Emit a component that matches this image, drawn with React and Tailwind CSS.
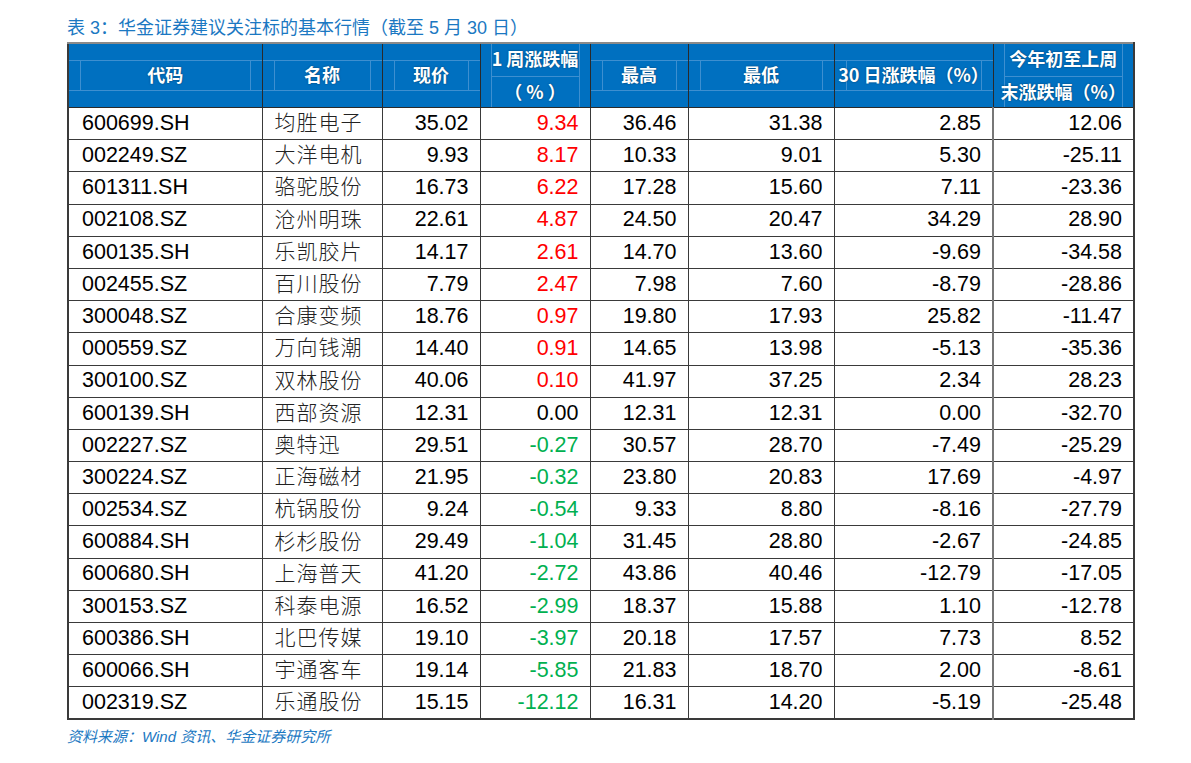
const ROWS = [
  ['600699.SH', '均胜电子', '35.02', '9.34', '36.46', '31.38', '2.85', '12.06'],
  ['002249.SZ', '大洋电机', '9.93', '8.17', '10.33', '9.01', '5.30', '-25.11'],
  ['601311.SH', '骆驼股份', '16.73', '6.22', '17.28', '15.60', '7.11', '-23.36'],
  ['002108.SZ', '沧州明珠', '22.61', '4.87', '24.50', '20.47', '34.29', '28.90'],
  ['600135.SH', '乐凯胶片', '14.17', '2.61', '14.70', '13.60', '-9.69', '-34.58'],
  ['002455.SZ', '百川股份', '7.79', '2.47', '7.98', '7.60', '-8.79', '-28.86'],
  ['300048.SZ', '合康变频', '18.76', '0.97', '19.80', '17.93', '25.82', '-11.47'],
  ['000559.SZ', '万向钱潮', '14.40', '0.91', '14.65', '13.98', '-5.13', '-35.36'],
  ['300100.SZ', '双林股份', '40.06', '0.10', '41.97', '37.25', '2.34', '28.23'],
  ['600139.SH', '西部资源', '12.31', '0.00', '12.31', '12.31', '0.00', '-32.70'],
  ['002227.SZ', '奥特迅', '29.51', '-0.27', '30.57', '28.70', '-7.49', '-25.29'],
  ['300224.SZ', '正海磁材', '21.95', '-0.32', '23.80', '20.83', '17.69', '-4.97'],
  ['002534.SZ', '杭锅股份', '9.24', '-0.54', '9.33', '8.80', '-8.16', '-27.79'],
  ['600884.SH', '杉杉股份', '29.49', '-1.04', '31.45', '28.80', '-2.67', '-24.85'],
  ['600680.SH', '上海普天', '41.20', '-2.72', '43.86', '40.46', '-12.79', '-17.05'],
  ['300153.SZ', '科泰电源', '16.52', '-2.99', '18.37', '15.88', '1.10', '-12.78'],
  ['600386.SH', '北巴传媒', '19.10', '-3.97', '20.18', '17.57', '7.73', '8.52'],
  ['600066.SH', '宇通客车', '19.14', '-5.85', '21.83', '18.70', '2.00', '-8.61'],
  ['002319.SZ', '乐通股份', '15.15', '-12.12', '16.31', '14.20', '-5.19', '-25.48'],
]

const WIDTHS = ['w-[194px]', 'w-[120px]', 'w-[98px]', 'w-[110px]', 'w-[98px]', 'w-[146px]', 'w-[159px]', 'w-[141px]']

const headText = "text-white font-bold text-[18px] leading-none whitespace-nowrap [text-shadow:0_0_2px_rgba(0,0,0,0.45)] [font-family:'Noto_Sans_CJK_SC',sans-serif]"

// single line header: light inner frame, text in the middle band
function HeadCell({ label }) {
  return (
    <th className="p-0 border border-[#2a2a2a] border-t-[#8a8a8a] bg-[#0070c0]">
      <div className="h-[63px] flex flex-col">
        <div className="h-[16px]" />
        <div className="flex-1 border-y border-[#3d8fd0] px-[11px]">
          <div className="h-full border-x border-[#3d8fd0] flex items-center justify-center pb-[3px]">
            <span className={headText}>{label}</span>
          </div>
        </div>
        <div className="h-[16px]" />
      </div>
    </th>
  )
}

// two line header: inner verticals full height, split in the middle
function HeadCell2({ top, bottom }) {
  return (
    <th className="p-0 border border-[#2a2a2a] border-t-[#8a8a8a] bg-[#0070c0]">
      <div className="h-[63px] px-[10px]">
        <div className="h-full border-x border-[#3d8fd0] flex flex-col">
          <div className="flex-1 border-b border-[#3d8fd0] flex items-center justify-center pb-[3px]">
            <span className={headText}>{top}</span>
          </div>
          <div className="flex-1 flex items-center justify-center pb-[2px]">
            <span className={headText}>{bottom}</span>
          </div>
        </div>
      </div>
    </th>
  )
}

function changeColor(v) {
  if (v.startsWith('-')) return 'text-[#00b050]'
  if (Number(v) > 0) return 'text-[#ff0000]'
  return 'text-black'
}

const num = "text-right pr-[11px] text-[21.5px] leading-none [font-family:'Liberation_Sans',Arial,sans-serif]"

export default function App() {
  return (
    <div className="w-[1191px] h-[763px] bg-white overflow-hidden pl-[67px] pt-[16px]">
      <div className="text-[18px] leading-[24px] text-[#1b78c2] mb-[2px] [font-family:'Liberation_Sans','Noto_Sans_CJK_SC',sans-serif]">
        表 3：华金证券建议关注标的基本行情（截至 5 月 30 日）
      </div>

      <table className="table-fixed border-collapse border-2 border-[#3a3a3a] border-t-[#8a8a8a] w-[1066px]">
        <colgroup>
          {WIDTHS.map(w => <col key={w} className={w} />)}
        </colgroup>
        <thead>
          <tr>
            <HeadCell label="代码" />
            <HeadCell label="名称" />
            <HeadCell label="现价" />
            <HeadCell2 top="1 周涨跌幅" bottom="（ % ）" />
            <HeadCell label="最高" />
            <HeadCell label="最低" />
            <HeadCell label="30 日涨跌幅（%）" />
            <HeadCell2 top="今年初至上周" bottom="末涨跌幅（%）" />
          </tr>
        </thead>
        <tbody>
          {ROWS.map(r => (
            <tr key={r[0]} className="h-[32.2px]">
              <td className="border border-[#3a3a3a] pl-[13px] text-[21.5px] leading-none text-black [font-family:'Liberation_Sans',Arial,sans-serif]">{r[0]}</td>
              <td className="border border-[#3a3a3a] pl-[12px] pb-[4px] text-[21px] leading-none text-[#222] tracking-[1px] font-light [font-family:'Noto_Sans_CJK_SC',sans-serif]">{r[1]}</td>
              <td className={`border border-[#3a3a3a] text-black ${num}`}>{r[2]}</td>
              <td className={`border border-[#3a3a3a] ${num} ${changeColor(r[3])}`}>{r[3]}</td>
              <td className={`border border-[#3a3a3a] text-black ${num}`}>{r[4]}</td>
              <td className={`border border-[#3a3a3a] text-black ${num}`}>{r[5]}</td>
              <td className={`border border-[#3a3a3a] border-r-2 border-r-[#777] text-black ${num}`}>{r[6]}</td>
              <td className={`border border-[#3a3a3a] text-black ${num}`}>{r[7]}</td>
            </tr>
          ))}
        </tbody>
      </table>

      <div className="mt-[7px] text-[15px] leading-[20px] italic text-[#1b78c2] [font-family:'Liberation_Sans','Noto_Sans_CJK_SC',sans-serif]">
        资料来源：Wind 资讯、华金证券研究所
      </div>
    </div>
  )
}
